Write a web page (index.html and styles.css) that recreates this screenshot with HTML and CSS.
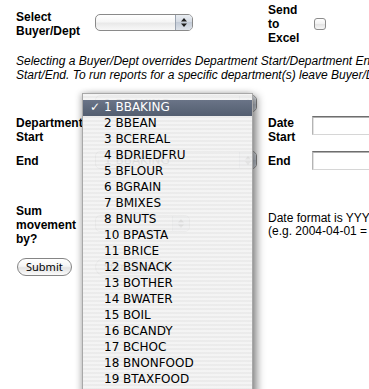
FILE: index.html
```html
<!DOCTYPE html>
<html lang="en">
<head>
<meta charset="UTF-8" />
<title>Movement Report</title>
<link rel="stylesheet" href="styles.css">
</head>
<body>
  <div class="page">
    <form class="report-form">
      <div class="row row-top">
        <label class="label">Select<br>Buyer/Dept</label>
        <span class="aqua-select buyer-select"><span class="arrows"><svg width="6" height="9" viewBox="0 0 6 9"><path d="M3 0 6 3.5H0Z M0 5.5H6L3 9Z" fill="#1e1e1e"/></svg></span></span>
        <label class="label">Send<br>to<br>Excel</label>
        <span class="checkbox"></span>
      </div>

      <p class="note">Selecting a Buyer/Dept overrides Department Start/Department End and Date<br>Start/End. To run reports for a specific department(s) leave Buyer/Dept blank.</p>

      <div class="row row-dept">
        <label class="label">Department<br>Start</label>
        <span class="aqua-select dept-select"><span class="value">1 BBAKING</span><span class="arrows"><svg width="6" height="9" viewBox="0 0 6 9"><path d="M3 0 6 3.5H0Z M0 5.5H6L3 9Z" fill="#1e1e1e"/></svg></span></span>
        <label class="label">Date<br>Start</label>
        <span class="text-input"></span>
      </div>

      <div class="row row-end">
        <label class="label">End</label>
        <span class="aqua-select end-select"><span class="value">1 BBAKING</span><span class="arrows"><svg width="6" height="9" viewBox="0 0 6 9"><path d="M3 0 6 3.5H0Z M0 5.5H6L3 9Z" fill="#1e1e1e"/></svg></span></span>
        <label class="label">End</label>
        <span class="text-input"></span>
      </div>

      <div class="row row-sum">
        <label class="label">Sum<br>movement<br>by?</label>
        <span class="aqua-select sum-select"><span class="arrows"><svg width="6" height="9" viewBox="0 0 6 9"><path d="M3 0 6 3.5H0Z M0 5.5H6L3 9Z" fill="#1e1e1e"/></svg></span></span>
        <p class="hint">Date format is YYYY-MM-DD<br>(e.g. 2004-04-01 = April 1, 2004)</p>
      </div>

      <div class="row row-buttons">
        <button type="button" class="aqua-button submit">Submit</button>
        <button type="button" class="aqua-button">Start Over</button>
      </div>
    </form>

    <!-- open popup of Department Start -->
    <ul class="dept-menu">
      <li class="selected"><span class="check">✓</span>1 BBAKING</li>
      <li>2 BBEAN</li>
      <li>3 BCEREAL</li>
      <li>4 BDRIEDFRU</li>
      <li>5 BFLOUR</li>
      <li>6 BGRAIN</li>
      <li>7 BMIXES</li>
      <li>8 BNUTS</li>
      <li>10 BPASTA</li>
      <li>11 BRICE</li>
      <li>12 BSNACK</li>
      <li>13 BOTHER</li>
      <li>14 BWATER</li>
      <li>15 BOIL</li>
      <li>16 BCANDY</li>
      <li>17 BCHOC</li>
      <li>18 BNONFOOD</li>
      <li>19 BTAXFOOD</li>
      <li>21 BAGREEUN</li>
    </ul>
  </div>
</body>
</html>
```

FILE: styles.css
```css
body {
  margin: 0;
  overflow: hidden;
  background: #fff;
}

.page {
  position: relative;
  width: 470px;
  height: 389px;
  padding-left: 16px;
  font-family: 'Liberation Sans', Arial, sans-serif;
  font-size: 12px;
  color: #000;
}

.report-form {
  margin: 0;
}

.row {
  display: grid;
  grid-template-columns: 79px 173px 44px 1fr;
  align-items: center;
}

.label {
  font-weight: bold;
  line-height: 14px;
}

.row-top {
  margin-top: 3px;
  height: 42px;
}

.note {
  margin: 9px 0 0 0;
  font-style: italic;
  line-height: 14px;
  white-space: nowrap;
}

.row-dept {
  margin-top: 32px;
  height: 32px;
}

.row-end {
  margin-top: 5px;
  height: 19px;
}

.row-sum {
  margin-top: 34px;
  height: 42px;
}

.row-buttons {
  margin-top: 12px;
}

/* aqua popup */
.aqua-select {
  box-sizing: border-box;
  display: flex;
  align-items: center;
  height: 17px;
  border: 1px solid #8a8a8a;
  border-radius: 5px;
  background: linear-gradient(#ffffff, #f6f6f6 45%, #e9e9e9 55%, #f8f8f8);
  overflow: hidden;
  font-family: 'DejaVu Sans', sans-serif;
  font-size: 12px;
}

.aqua-select .value {
  flex: 1;
  padding-left: 8px;
}

.aqua-select .arrows {
  margin-left: auto;
  width: 16px;
  height: 100%;
  display: flex;
  align-items: center;
  justify-content: center;
  border-left: 1px solid #9aa3b0;
  background: linear-gradient(#e9edf2, #d3d9e2 50%, #c3cbd7 50%, #dde2e9);
}

.buyer-select {
  width: 98px;
  align-self: start;
  margin-top: 11px;
}

.dept-select {
  width: 162px;
  align-self: start;
  margin-top: -19px;
}

.end-select {
  width: 162px;
  height: 18px;
  align-self: start;
}

.sum-select {
  width: 95px;
  align-self: start;
  margin-top: 11px;
}

.checkbox {
  box-sizing: border-box;
  display: block;
  width: 12px;
  height: 12px;
  margin-left: 2px;
  border: 1px solid #8c8c8c;
  border-radius: 3px;
  background: linear-gradient(#ffffff, #f1f1f1 50%, #e2e2e2 50%, #f7f7f7);
}

.text-input {
  box-sizing: border-box;
  display: block;
  width: 130px;
  height: 19px;
  border: 1px solid #b4b4b4;
  border-top-color: #6e6e6e;
  border-bottom-color: #d6d6d6;
  box-shadow: inset 0 1px 0 #b0b0b0, inset 1px 0 0 #e2e2e2;
  background: #fff;
}

.row-dept .text-input {
  align-self: start;
  margin-top: 2px;
}

.hint {
  grid-column: 3 / span 2;
  margin: 0;
  line-height: 13px;
  white-space: nowrap;
}

.aqua-button {
  justify-self: start;
  height: 18px;
  padding: 0 8px;
  border: 1px solid #858585;
  border-radius: 9px;
  background: linear-gradient(#ffffff, #f5f5f5 45%, #e3e3e3 55%, #fbfbfb);
  font-family: 'Noto Sans', sans-serif;
  font-size: 11px;
  line-height: 14px;
  color: #000;
}

.aqua-button.submit {
  margin-left: 1px;
}

/* popup menu */
.dept-menu {
  position: absolute;
  left: 82px;
  top: 90px;
  box-sizing: border-box;
  width: 171px;
  height: 320px;
  margin: 0;
  padding: 6px 0 0 0;
  list-style: none;
  border: 1px solid #a8a8a8;
  border-bottom: none;
  background: repeating-linear-gradient(rgba(243,243,243,0.93) 0 2px, rgba(234,234,234,0.93) 2px 4px);
  box-shadow: 4px 3px 8px rgba(0,0,0,0.45), -2px 0 6px rgba(0,0,0,0.18);
  font-family: 'DejaVu Sans', sans-serif;
  font-size: 12px;
  color: #000;
  overflow: hidden;
}

.dept-menu li {
  position: relative;
  box-sizing: border-box;
  height: 16px;
  line-height: 14px;
  padding: 0 0 2px 21px;
  white-space: nowrap;
}

.dept-menu li.selected {
  background: linear-gradient(#6a7487, #535e70);
  color: #fff;
}

.dept-menu .check {
  position: absolute;
  left: 7px;
  top: 0;
  font-weight: bold;
}
```
